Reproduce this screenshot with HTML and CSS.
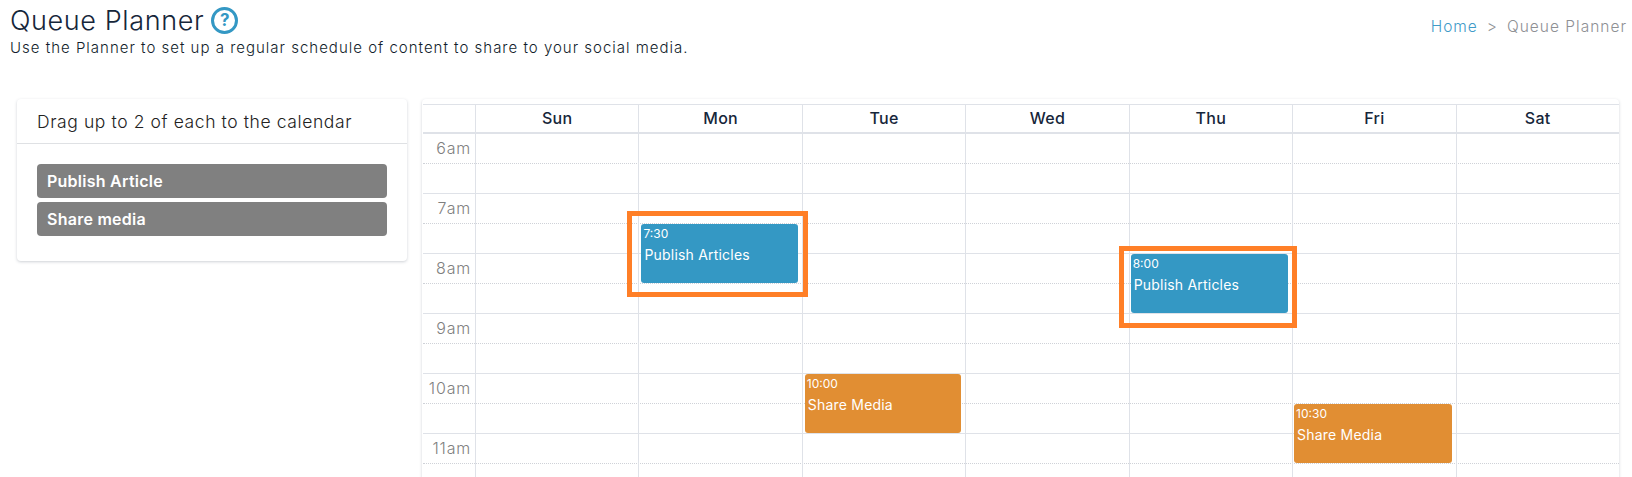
FILE: index.html
```html
<!DOCTYPE html>
<html lang="en">
<head>
<meta charset="utf-8">
<title>Queue Planner</title>
<link rel="stylesheet" href="styles.css">
</head>
<body>
<header class="page-head">
  <div class="head-left">
    <h1 class="title">Queue Planner <span class="help">?</span></h1>
    <p class="subtitle">Use the Planner to set up a regular schedule of content to share to your social media.</p>
  </div>
  <nav class="crumbs"><a class="crumb-link">Home</a><span class="crumb-sep">&gt;</span><span>Queue Planner</span></nav>
</header>
<main class="content">
  <aside class="card drag">
    <div class="drag-head">Drag up to 2 of each to the calendar</div>
    <div class="drag-body">
      <div class="pill pill-a">Publish Article</div>
      <div class="pill pill-b">Share media</div>
    </div>
  </aside>
  <section class="card calendar">
    <div class="cal-head">
      <div class="axis"></div>
      <div class="day">Sun</div><div class="day">Mon</div><div class="day">Tue</div><div class="day">Wed</div><div class="day">Thu</div><div class="day">Fri</div><div class="day">Sat</div>
    </div>
    <div class="cal-body">
      <div class="slots">
        <div class="slot"><span class="hour">6am</span></div><div class="slot hour-end"></div>
        <div class="slot"><span class="hour">7am</span></div><div class="slot hour-end"></div>
        <div class="slot"><span class="hour">8am</span></div><div class="slot hour-end"></div>
        <div class="slot"><span class="hour">9am</span></div><div class="slot hour-end"></div>
        <div class="slot"><span class="hour">10am</span></div><div class="slot hour-end"></div>
        <div class="slot"><span class="hour">11am</span></div><div class="slot hour-end"></div>
      </div>
      <div class="columns">
        <div class="axis"></div>
        <div class="col"></div>
        <div class="col">
          <div class="event blue at-730 inset-wide"><span class="ev-time">7:30</span><span class="ev-name">Publish Articles</span></div>
          <div class="mark mark-mon"></div>
        </div>
        <div class="col">
          <div class="event orange at-1000 inset-wide"><span class="ev-time">10:00</span><span class="ev-name">Share Media</span></div>
        </div>
        <div class="col"></div>
        <div class="col">
          <div class="event blue at-800"><span class="ev-time">8:00</span><span class="ev-name">Publish Articles</span></div>
          <div class="mark mark-thu"></div>
        </div>
        <div class="col">
          <div class="event orange at-1030"><span class="ev-time">10:30</span><span class="ev-name">Share Media</span></div>
        </div>
        <div class="col"></div>
      </div>
    </div>
  </section>
</main>
</body>
</html>
```
FILE: styles.css
```css
* { box-sizing: border-box; }
html, body { height: 477px; overflow: hidden; }
body {
  margin: 0;
  background: #fff;
  font-family: Inter, "Open Sans", sans-serif;
  color: #1b2a3d;
}
.page-head {
  display: flex;
  justify-content: space-between;
  align-items: flex-start;
  height: 99px;
  padding: 4px 5px 0 10px;
}
.title {
  margin: 0;
  display: flex;
  align-items: center;
  gap: 7px;
  height: 32px;
  font-size: 27px;
  font-weight: 300;
  letter-spacing: 0.6px;
  color: #16263a;
}
.help {
  width: 27px;
  height: 27px;
  border: 3px solid #3498c4;
  border-radius: 50%;
  display: flex;
  align-items: center;
  justify-content: center;
  font-size: 17px;
  font-weight: 700;
  letter-spacing: 0;
  color: #3498c4;
}
.subtitle {
  margin: 3px 0 0;
  font-size: 15px;
  line-height: 18px;
  letter-spacing: 1px;
  font-weight: 300;
  color: #111d2b;
}
.crumbs {
  display: flex;
  gap: 9px;
  margin-top: 13px;
  font-size: 15.5px;
  line-height: 20px;
  letter-spacing: 1px;
  font-weight: 300;
  color: #8e9094;
}
.crumb-link { color: #3f9bc8; }
.content {
  display: flex;
  align-items: flex-start;
  padding: 0 13px 0 17px;
  gap: 15px;
}
.card {
  background: #fff;
  border-radius: 4px;
  box-shadow: 0 1px 3px rgba(60, 70, 90, 0.25);
}
.drag {
  flex: 0 0 390px;
  height: 162px;
}
.drag-head {
  height: 45px;
  padding: 13px 20px 0;
  border-bottom: 1px solid #dfe1e4;
  font-size: 17.5px;
  line-height: 20px;
  font-weight: 300;
  letter-spacing: 0.6px;
  color: #222;
}
.drag-body {
  display: flex;
  flex-direction: column;
  gap: 4px;
  padding: 20px 20px 0;
}
.pill {
  height: 34px;
  padding-left: 10px;
  border-radius: 4px;
  background: #808080;
  color: #fff;
  font-size: 16px;
  line-height: 34px;
  font-weight: 600;
  letter-spacing: 0.25px;
}
.calendar {
  flex: 1;
  padding: 5px 0 0 1px;
  height: 400px;
}
.cal-head {
  display: flex;
  height: 30px;
  border-top: 1px solid #dfe2e8;
  border-bottom: 2px solid #dfe2e8;
}
.axis { flex: 0 0 52px; }
.day {
  flex: 1 1 0;
  border-left: 1px solid #dfe2e8;
  text-align: center;
  font-size: 16px;
  line-height: 27px;
  font-weight: 500;
  letter-spacing: 0.3px;
  color: #16263a;
}
.cal-body { position: relative; }
.slot {
  height: 30px;
  border-bottom: 1px dotted #cfd2d8;
}
.hour-end { border-bottom: 1px solid #dfe2e8; }
.hour {
  display: block;
  width: 52px;
  padding-right: 4px;
  text-align: right;
  font-size: 16px;
  line-height: 28px;
  font-weight: 300;
  letter-spacing: 0.8px;
  color: #7f7f7f;
}
.columns {
  position: absolute;
  inset: 0;
  display: flex;
}
.col {
  position: relative;
  flex: 1 1 0;
  border-left: 1px solid #dfe2e8;
}
.event {
  position: absolute;
  left: 1px;
  right: 4px;
  height: 59px;
  padding: 3px 2px 2px;
  border-radius: 3px;
  color: #fff;
  display: flex;
  flex-direction: column;
}
.inset-wide { left: 2px; }
.blue { background: #3498c4; }
.orange { background: #e18e33; }
.at-730 { top: 90px; }
.at-800 { top: 120px; }
.at-1000 { top: 240px; }
.at-1030 { top: 270px; }
.ev-time {
  font-size: 12px;
  line-height: 14px;
}
.ev-name {
  margin-top: 4px;
  padding-left: 1px;
  font-size: 14px;
  line-height: 20px;
  letter-spacing: 0.2px;
}
.mark {
  position: absolute;
  z-index: 1;
  border: 5px solid #ff7f27;
}
.mark-mon { left: -12px; top: 77px; width: 181px; height: 86px; }
.mark-thu { left: -11px; top: 112px; width: 178px; height: 82px; }
```
